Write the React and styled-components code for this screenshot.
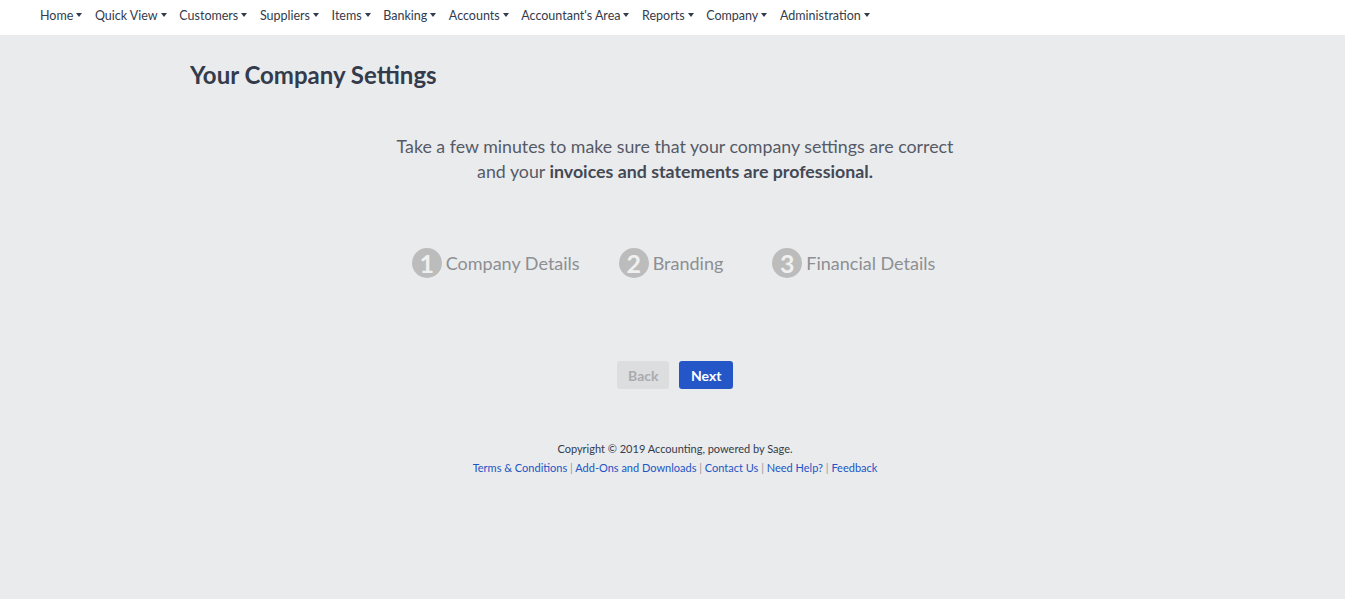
import React from "react";
import styled, { createGlobalStyle } from "styled-components";

const Global = createGlobalStyle`
  html, body { margin: 0; padding: 0; }
  body {
    background: #eaebed;
    font-family: Lato, "Open Sans", Arial, sans-serif;
    color: #333;
  }
`;

const NavBar = styled.nav`
  height: 35px;
  background: #fff;
  display: flex;
  align-items: center;
  padding-left: 40px;
  gap: 12.6px;
  box-sizing: border-box;
`;

const NavItem = styled.a`
  font-size: 12.5px;
  color: #333b4c;
  text-decoration: none;
  display: flex;
  align-items: center;
  gap: 3px;
  margin-top: -4px;
`;

const Caret = styled.span`
  width: 0;
  height: 0;
  border-left: 3px solid transparent;
  border-right: 3px solid transparent;
  border-top: 4px solid #333b4c;
  margin-top: -2px;
`;

const Main = styled.main`
  width: 970px;
  margin-left: 190px;
  padding-top: 25px;
`;

const Title = styled.h1`
  margin: 0;
  font-size: 24px;
  font-weight: 700;
  color: #333b4c;
  line-height: 30px;
`;

const Intro = styled.p`
  margin: 44px 0 0;
  text-align: center;
  font-size: 17.8px;
  line-height: 25px;
  color: #555a66;
  strong { font-weight: 700; color: #444954; }
`;

const Steps = styled.div`
  display: flex;
  justify-content: center;
  margin-top: 64px;
  padding-right: 3px;
`;

const Step = styled.div`
  display: flex;
  align-items: center;
  gap: 4px;
  margin-right: ${(p) => p.$after}px;
  font-size: 18px;
  color: #8d8f92;
`;

const Circle = styled.span`
  width: 30px;
  height: 30px;
  border-radius: 50%;
  background: #bcbcbc;
  color: #f0f0f0;
  font-weight: 700;
  font-size: 25px;
  display: flex;
  align-items: center;
  justify-content: center;
  line-height: 1;
`;

const Buttons = styled.div`
  display: flex;
  justify-content: center;
  gap: 10px;
  margin-top: 83px;
`;

const Button = styled.button`
  font-family: Lato, Arial, sans-serif;
  font-weight: 700;
  font-size: 14px;
  height: 28px;
  padding: 0 ${(p) => (p.$primary ? "11.5px" : "11px")};
  border: none;
  border-radius: 3px;
  background: ${(p) => (p.$primary ? "#2456c8" : "#dcdddf")};
  color: ${(p) => (p.$primary ? "#fff" : "#a9abae")};
`;

const Footer = styled.footer`
  margin-top: 50px;
  text-align: center;
  font-size: 11px;
  line-height: 19px;
`;

const Copy = styled.div`
  color: #333b4c;
`;

const Links = styled.div`
  color: #999;
`;

const Link = styled.a`
  color: #2355c5;
  text-decoration: none;
`;

const navItems = [
  "Home",
  "Quick View",
  "Customers",
  "Suppliers",
  "Items",
  "Banking",
  "Accounts",
  "Accountant's Area",
  "Reports",
  "Company",
  "Administration",
];

const links = [
  "Terms & Conditions",
  "Add-Ons and Downloads",
  "Contact Us",
  "Need Help?",
  "Feedback",
];

export default function App() {
  return (
    <>
      <Global />
      <NavBar>
        {navItems.map((n) => (
          <NavItem key={n} href="#">
            {n}
            <Caret />
          </NavItem>
        ))}
      </NavBar>
      <Main>
        <Title>Your Company Settings</Title>
        <Intro>
          Take a few minutes to make sure that your company settings are correct
          <br />
          and your <strong>invoices and statements are professional.</strong>
        </Intro>
        <Steps>
          <Step $after={39}>
            <Circle>1</Circle>Company Details
          </Step>
          <Step $after={49}>
            <Circle>2</Circle>Branding
          </Step>
          <Step $after={0}>
            <Circle>3</Circle>Financial Details
          </Step>
        </Steps>
        <Buttons>
          <Button>Back</Button>
          <Button $primary>Next</Button>
        </Buttons>
        <Footer>
          <Copy>Copyright © 2019 Accounting, powered by Sage.</Copy>
          <Links>
            {links.map((l, i) => (
              <React.Fragment key={l}>
                {i > 0 && " | "}
                <Link href="#">{l}</Link>
              </React.Fragment>
            ))}
          </Links>
        </Footer>
      </Main>
    </>
  );
}
